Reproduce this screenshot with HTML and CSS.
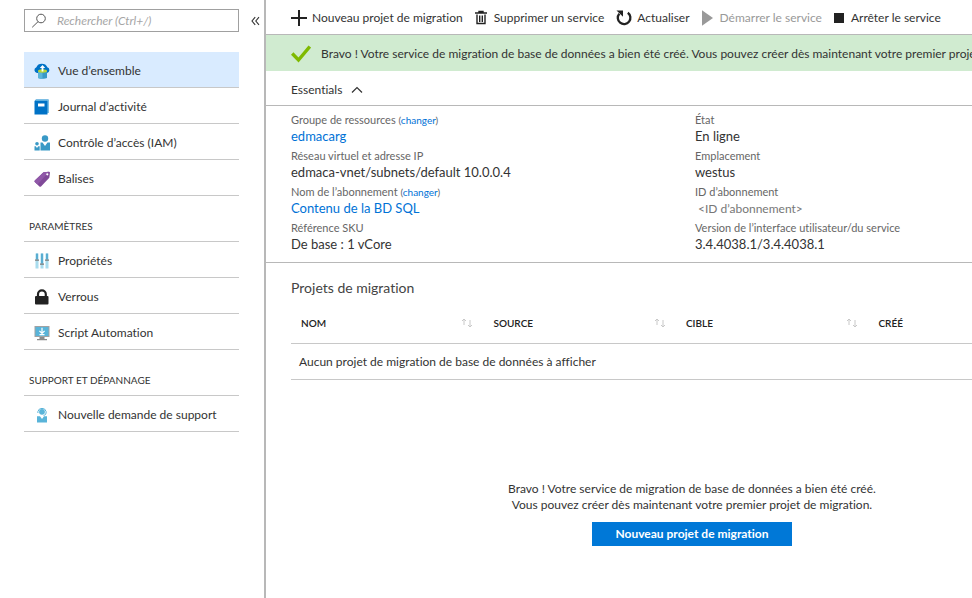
FILE: index.html
```html
<!DOCTYPE html>
<html lang="fr">
<head>
<meta charset="utf-8">
<title>Service de migration de base de données</title>
<link rel="stylesheet" href="styles.css">
</head>
<body>
<div class="app">
  <aside class="sidebar">
    <div class="search-row">
      <label class="search">
        <svg width="16" height="16" viewBox="0 0 16 16" fill="none" stroke="#555" stroke-width="1" aria-hidden="true"><circle cx="10" cy="5.500" r="4.300"/><path d="M7 8.700 1.200 14.300"/></svg>
        <input type="text" placeholder="Rechercher (Ctrl+/)" aria-label="Rechercher">
      </label>
      <button class="collapse" type="button" aria-label="Réduire le menu">
        <svg width="9" height="10" viewBox="0 0 9 10" fill="none" stroke="#333" stroke-width="1.100"><path d="M4.200 1.200 1 5l3.200 3.800M8 1.200 4.800 5 8 8.800"/></svg>
      </button>
    </div>
    <nav class="menu">
      <a class="item active" href="#">
        <svg class="icon" viewBox="0 0 16 16" aria-hidden="true"><path d="M3 10A3 3 0 0 1 2.400 4.200 5.800 5.200 0 0 1 13.300 4.200 3 3 0 0 1 13 10Z" fill="#0072c6"/><path d="M4 8h9v7c-1.500 1-7.500 1-9 0Z" fill="#3999c6"/><path d="M4 8h4.500v7.700C6.500 15.700 4.700 15.500 4 15Z" fill="#59b4d9"/><ellipse cx="8.500" cy="8" rx="4.500" ry="1.700" fill="#b8d432"/><path d="M7.600 8.500V5H5.800l2.700-3 2.700 3H9.400v3.500Z" fill="#fff"/></svg>
        <span>Vue d’ensemble</span></a>
      <a class="item" href="#">
        <svg class="icon" viewBox="0 0 16 16" aria-hidden="true"><path d="M2 .5h12.500V14h-1v1.500H.5V2Z" fill="#0072c6"/><path d="M13.500 1h1.200v13h-1.200zM2 .5h12.500v1.200H1z" fill="#7fc4e6"/><path d="M4 4.500h6.500v3H4z" fill="#fff"/></svg>
        <span>Journal d’activité</span></a>
      <a class="item" href="#">
        <svg class="icon" viewBox="0 0 16 16" aria-hidden="true"><circle cx="11" cy="3.500" r="3.200" fill="#3999c6"/><path d="M6.500 7.500h2L11 11l2.500-3.500H16V15.500H6.500Z" fill="#3999c6"/><circle cx="3" cy="8.800" r="1.800" fill="#3999c6"/><path d="M.5 11.300h1.200L3 13l1.300-1.700h1.400v4.200H.5Z" fill="#3999c6"/></svg>
        <span>Contrôle d’accès (IAM)</span></a>
      <a class="item" href="#">
        <svg class="icon" viewBox="0 0 16 16" aria-hidden="true"><path d="M9.500 1.200 15 .8q1 0 1 1l-.7 5L7 15.500q-.8.700-1.600 0L.8 11q-.7-.8 0-1.600Z" fill="#804998"/><path d="M9.500 1.200 15 .8 3.500 13.500.8 11q-.7-.8 0-1.600Z" fill="#9058a8"/><circle cx="13.300" cy="3.300" r="1.100" fill="#fff"/></svg>
        <span>Balises</span></a>
      <h2 class="heading">PARAMÈTRES</h2>
      <a class="item" href="#">
        <svg class="icon" viewBox="0 0 16 16" aria-hidden="true"><path d="M1.500 .5h3v15h-3zM6.500 .5h3v15h-3zM11.500 .5h3v15h-3z" fill="#a8dcee"/><path d="M2.300 .5h1.400v6H2.300zM7.300 .5h1.400v10H7.300zM12.300 .5h1.400v6h-1.400z" fill="#3999c6"/><path d="M1 6.500h4v1.200H1zM6 10.500h4v1.200H6zM11 6.500h4v1.200h-4z" fill="#7a7a7a"/></svg>
        <span>Propriétés</span></a>
      <a class="item" href="#">
        <svg class="icon" viewBox="0 0 16 16" aria-hidden="true"><path d="M4 8V5.200a3.900 3.900 0 0 1 7.800 0V8" fill="none" stroke="#222" stroke-width="2.200"/><rect x="1" y="7" width="13.500" height="8.500" rx="1" fill="#222"/></svg>
        <span>Verrous</span></a>
      <a class="item" href="#">
        <svg class="icon" viewBox="0 0 16 16" aria-hidden="true"><path d="M.5 1h15v11H.5z" fill="#a0a1a2"/><path d="M1.500 2h13v9h-13z" fill="#59b4d9"/><path d="M5.500 12h5v2h2.500v1.300H3V14h2.500z" fill="#8a8a8a"/><path d="M8 2.800v5.500M5.400 5.900 8 8.500l2.600-2.600M5.500 9.700h5" fill="none" stroke="#fff" stroke-width="1.200"/></svg>
        <span>Script Automation</span></a>
      <h2 class="heading">SUPPORT ET DÉPANNAGE</h2>
      <a class="item" href="#">
        <svg class="icon" viewBox="0 0 16 16" aria-hidden="true"><circle cx="8" cy="4.800" r="2.900" fill="#59b4d9"/><path d="M3.900 6V4.500a4.200 4 0 0 1 8.200 0V6q0 2-2.500 2.500" fill="none" stroke="#59b4d9"/><path d="M3 9.200h3L8 12l2-2.800h3v6.300H3Z" fill="#59b4d9"/></svg>
        <span>Nouvelle demande de support</span></a>
    </nav>
  </aside>

  <main class="main">
    <div class="blade">
      <div class="toolbar">
        <button type="button" class="command"><svg width="16" height="16" viewBox="0 0 16 16" aria-hidden="true"><path d="M7 0h2v7h7v2H9v7H7V9H0V7h7z" fill="#222"/></svg>Nouveau projet de migration</button>
        <button type="button" class="command wide"><svg width="12" height="16" viewBox="0 0 12 16" fill="none" stroke="#222" aria-hidden="true"><path d="M0 3h12M4 2.800V1.500h4v1.300" stroke-width="1.400"/><path d="M2 4.500v9h8v-9M4.700 5.500v6.500M7.300 5.500v6.500" stroke-width="1.400"/></svg>Supprimer un service</button>
        <button type="button" class="command"><svg width="16" height="16" viewBox="0 0 16 16" aria-hidden="true"><path d="M3.300 3.700A6.300 6.300 0 1 0 11.800 2.700" fill="none" stroke="#222" stroke-width="2.300"/><path d="M.5.500h6.500v6.300z" fill="#222"/></svg>Actualiser</button>
        <button type="button" class="command wide" disabled><svg width="11" height="16" viewBox="0 0 11 16" aria-hidden="true"><path d="M0 .3 11 8 0 15.700z" fill="#999"/></svg>Démarrer le service</button>
        <button type="button" class="command wide"><svg width="10" height="16" viewBox="0 0 10 16" aria-hidden="true"><path d="M0 3h10v10H0z" fill="#222"/></svg>Arrêter le service</button>
      </div>
      <div class="banner" role="status">
        <svg width="20" height="18" viewBox="0 0 20 18" aria-hidden="true"><path d="M1.200 8.500 7.500 15 18.800 1.500" fill="none" stroke="#7fba00" stroke-width="3.400"/></svg>
        <span>Bravo ! Votre service de migration de base de données a bien été créé. Vous pouvez créer dès maintenant votre premier projet de migration.</span>
      </div>
      <button type="button" class="essentials">Essentials
        <svg width="12" height="8" viewBox="0 0 12 8" fill="none" stroke="#333" stroke-width="1.200" aria-hidden="true"><path d="M1 6.500 6 1.500l5 5"/></svg>
      </button>
      <div class="details">
        <dl>
          <dt>Groupe de ressources <small>(<a href="#">changer</a>)</small></dt><dd><a href="#">edmacarg</a></dd>
          <dt>Réseau virtuel et adresse IP</dt><dd>edmaca-vnet/subnets/default 10.0.0.4</dd>
          <dt>Nom de l’abonnement <small>(<a href="#">changer</a>)</small></dt><dd><a href="#">Contenu de la BD SQL</a></dd>
          <dt>Référence SKU</dt><dd>De base : 1 vCore</dd>
        </dl>
        <dl>
          <dt>État</dt><dd>En ligne</dd>
          <dt>Emplacement</dt><dd>westus</dd>
          <dt>ID d’abonnement</dt><dd class="placeholder">&lt;ID d’abonnement&gt;</dd>
          <dt>Version de l’interface utilisateur/du service</dt><dd>3.4.4038.1/3.4.4038.1</dd>
        </dl>
      </div>
      <section class="projects">
        <h1>Projets de migration</h1>
        <table>
          <thead><tr>
            <th><div class="column">NOM <svg class="sort" viewBox="0 0 12 10"><path d="M3 7V1M1 3l2-2 2 2M9 2v7M7 7l2 2 2-2"/></svg></div></th>
            <th><div class="column">SOURCE <svg class="sort" viewBox="0 0 12 10"><path d="M3 7V1M1 3l2-2 2 2M9 2v7M7 7l2 2 2-2"/></svg></div></th>
            <th><div class="column">CIBLE <svg class="sort" viewBox="0 0 12 10"><path d="M3 7V1M1 3l2-2 2 2M9 2v7M7 7l2 2 2-2"/></svg></div></th>
            <th>CRÉÉ</th>
          </tr></thead>
          <tbody><tr><td colspan="4">Aucun projet de migration de base de données à afficher</td></tr></tbody>
        </table>
        <div class="empty">
          <p>Bravo ! Votre service de migration de base de données a bien été créé.<br>Vous pouvez créer dès maintenant votre premier projet de migration.</p>
          <button type="button" class="primary">Nouveau projet de migration</button>
        </div>
      </section>
    </div>
  </main>
</div>
</body>
</html>
```

FILE: styles.css
```css
* { box-sizing: border-box; }
body {
  margin: 0;
  background: #fff;
  color: #333;
  font: 12px/16px Lato, "Open Sans", sans-serif;
  font-variant-ligatures: none;
}
button, input { font: inherit; color: inherit; }
button { background: none; border: 0; padding: 0; }
a { color: #0072d6; text-decoration: none; }
svg { flex: none; }
.app { display: flex; min-height: 100vh; }

.sidebar {
  flex: none;
  width: 266px;
  padding: 9px 4px 0 24px;
  border-right: 2px solid #b8b8b8;
}
.search-row { display: flex; align-items: center; gap: 12px; margin-bottom: 20px; }
.search {
  display: flex;
  align-items: center;
  gap: 10px;
  width: 215px;
  height: 23px;
  padding: 0 6px;
  border: 1px solid #a0a0a0;
}
.search input { flex: 1; min-width: 0; border: 0; padding: 0; outline: 0; background: none; }
.search input::placeholder { color: #a6a6a6; font-style: italic; opacity: 1; }
.collapse { display: flex; }
.menu { width: 215px; }
.item {
  display: flex;
  align-items: center;
  gap: 8px;
  height: 36px;
  padding: 2px 10px 0;
  border-bottom: 1px solid #c8c8c8;
  color: #333;
}
.item.active { background: #d9ebff; }
.icon { width: 16px; height: 16px; }
.heading {
  margin: 0;
  height: 46px;
  padding: 22px 5px 0;
  border-bottom: 1px solid #c8c8c8;
  font-size: 10px;
  font-weight: 400;
}

.main { flex: 1; min-width: 0; overflow: hidden; }
.blade { min-width: 852px; }
.toolbar {
  display: flex;
  align-items: center;
  gap: 12px;
  height: 35px;
  padding: 1px 25px 0;
  border-bottom: 1px solid #b8b8b8;
}
.command { display: flex; align-items: center; gap: 5px; white-space: nowrap; }
.command.wide { gap: 7px; }
.command:disabled { color: #999; }
.banner {
  display: flex;
  align-items: center;
  gap: 10px;
  height: 36px;
  padding: 1px 25px 0;
  background: #d0ebd0;
  white-space: nowrap;
}
.essentials {
  display: flex;
  align-items: center;
  gap: 9px;
  width: 100%;
  height: 35px;
  padding: 3px 25px 0;
  border-bottom: 1px solid #b8b8b8;
}
.details {
  display: grid;
  grid-template-columns: 1fr 1fr;
  padding: 6px 19px 6px 25px;
  border-bottom: 1px solid #b8b8b8;
}
dl { margin: 0; }
dt { height: 16px; font-size: 11px; color: #666; }
dt small { font-size: 10px; }
dd { height: 20px; margin: 0; font-size: 13px; }
.placeholder { padding-left: 3px; font-size: 12px; line-height: 18px; color: #777; }

.projects { padding: 15px 25px; }
h1 { margin: 0; font-size: 14px; line-height: 20px; font-weight: 400; color: #444; }
table { width: 100%; margin-top: 5px; border-collapse: collapse; table-layout: fixed; }
th, td { text-align: left; border-bottom: 1px solid #c8c8c8; }
th { width: 24%; height: 40px; padding: 0 10px; font-size: 10px; font-weight: 600; color: #222; }
th:last-child { width: 28%; }
td { height: 36px; padding: 2px 8px 0; }
.column { display: flex; justify-content: space-between; align-items: center; }
.sort { width: 12px; height: 10px; fill: none; stroke: #c8c8c8; }
.empty { margin-top: 101px; text-align: center; }
.empty p { margin: 0 0 9px; }
.primary { width: 200px; height: 24px; background: #0078d7; color: #fff; font-weight: 700; }
```
